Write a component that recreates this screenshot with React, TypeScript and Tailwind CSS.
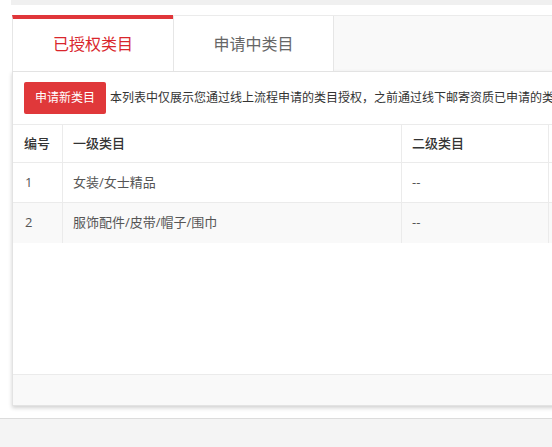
import React from "react";

const rows = [
  { id: "1", first: "女装/女士精品", second: "--" },
  { id: "2", first: "服饰配件/皮带/帽子/围巾", second: "--" },
];

export default function App() {
  return (
    <div className="w-[552px] h-[447px] overflow-hidden bg-white flex flex-col font-['Open_Sans','Noto_Sans_CJK_SC',sans-serif]">
      <div className="h-[5px] ml-[11px] bg-[#f0f0f0] shrink-0" />
      <div className="h-[10px] shrink-0" />
      <div className="ml-[12px] w-[720px] shrink-0">
        <div className="flex h-[56px] bg-[#f9f9f9] border-t border-[#ebebeb]">
          <div className="w-[161px] -mt-px bg-white border-t-[4px] border-t-[#e0363a] border-l border-l-[#e6e6e6] flex items-center justify-center text-[16px] text-[#d9262c] pb-[2px]">
            已授权类目
          </div>
          <div className="w-[161px] bg-white border-l border-r border-[#e6e6e6] flex items-center justify-center text-[16px] text-[#666] pt-[1px]">
            申请中类目
          </div>
        </div>
        <div className="h-[335px] flex flex-col border border-[#e3e3e3] bg-white shadow-[0_2px_4px_rgba(0,0,0,0.18)]">
          <div className="h-[52px] flex items-center px-[11px] shrink-0">
            <button className="h-[32px] w-[82px] rounded-[2px] bg-[#e0383a] text-white text-[12px] flex items-center justify-center">
              申请新类目
            </button>
            <span className="ml-[4px] text-[12px] text-[#333] whitespace-nowrap">
              本列表中仅展示您通过线上流程申请的类目授权，之前通过线下邮寄资质已申请的类目请联系客服查看
            </span>
          </div>
          <div className="border-t border-[#ebebeb] text-[13px]">
            <div className="flex h-[38px] border-b border-[#ebebeb] text-[#333] font-medium">
              <div className="w-[50px] border-r border-[#ebebeb] flex items-center pl-[11px]">编号</div>
              <div className="w-[339px] border-r border-[#ebebeb] flex items-center pl-[10px]">一级类目</div>
              <div className="w-[147px] border-r border-[#ebebeb] flex items-center pl-[10px]">二级类目</div>
              <div className="flex-1" />
            </div>
            {rows.map((r, i) => (
              <div
                key={r.id}
                className={
                  i % 2 === 1
                    ? "flex h-[40px] bg-[#f9f9f9] text-[#555]"
                    : "flex h-[40px] border-b border-[#ebebeb] text-[#555]"
                }
              >
                <div className="w-[50px] border-r border-[#ebebeb] flex items-center pl-[12px]">{r.id}</div>
                <div className="w-[339px] border-r border-[#ebebeb] flex items-center pl-[10px]">{r.first}</div>
                <div className="w-[147px] border-r border-[#ebebeb] flex items-center pl-[10px]">{r.second}</div>
                <div className="flex-1" />
              </div>
            ))}
          </div>
          <div className="flex-1" />
          <div className="h-[31px] shrink-0 bg-[#f9f9f9] border-t border-[#ebebeb]" />
        </div>
      </div>
      <div className="h-[12px] shrink-0" />
      <div className="flex-1 bg-[#f4f4f4] border-t border-[#dcdcdc]" />
    </div>
  );
}
